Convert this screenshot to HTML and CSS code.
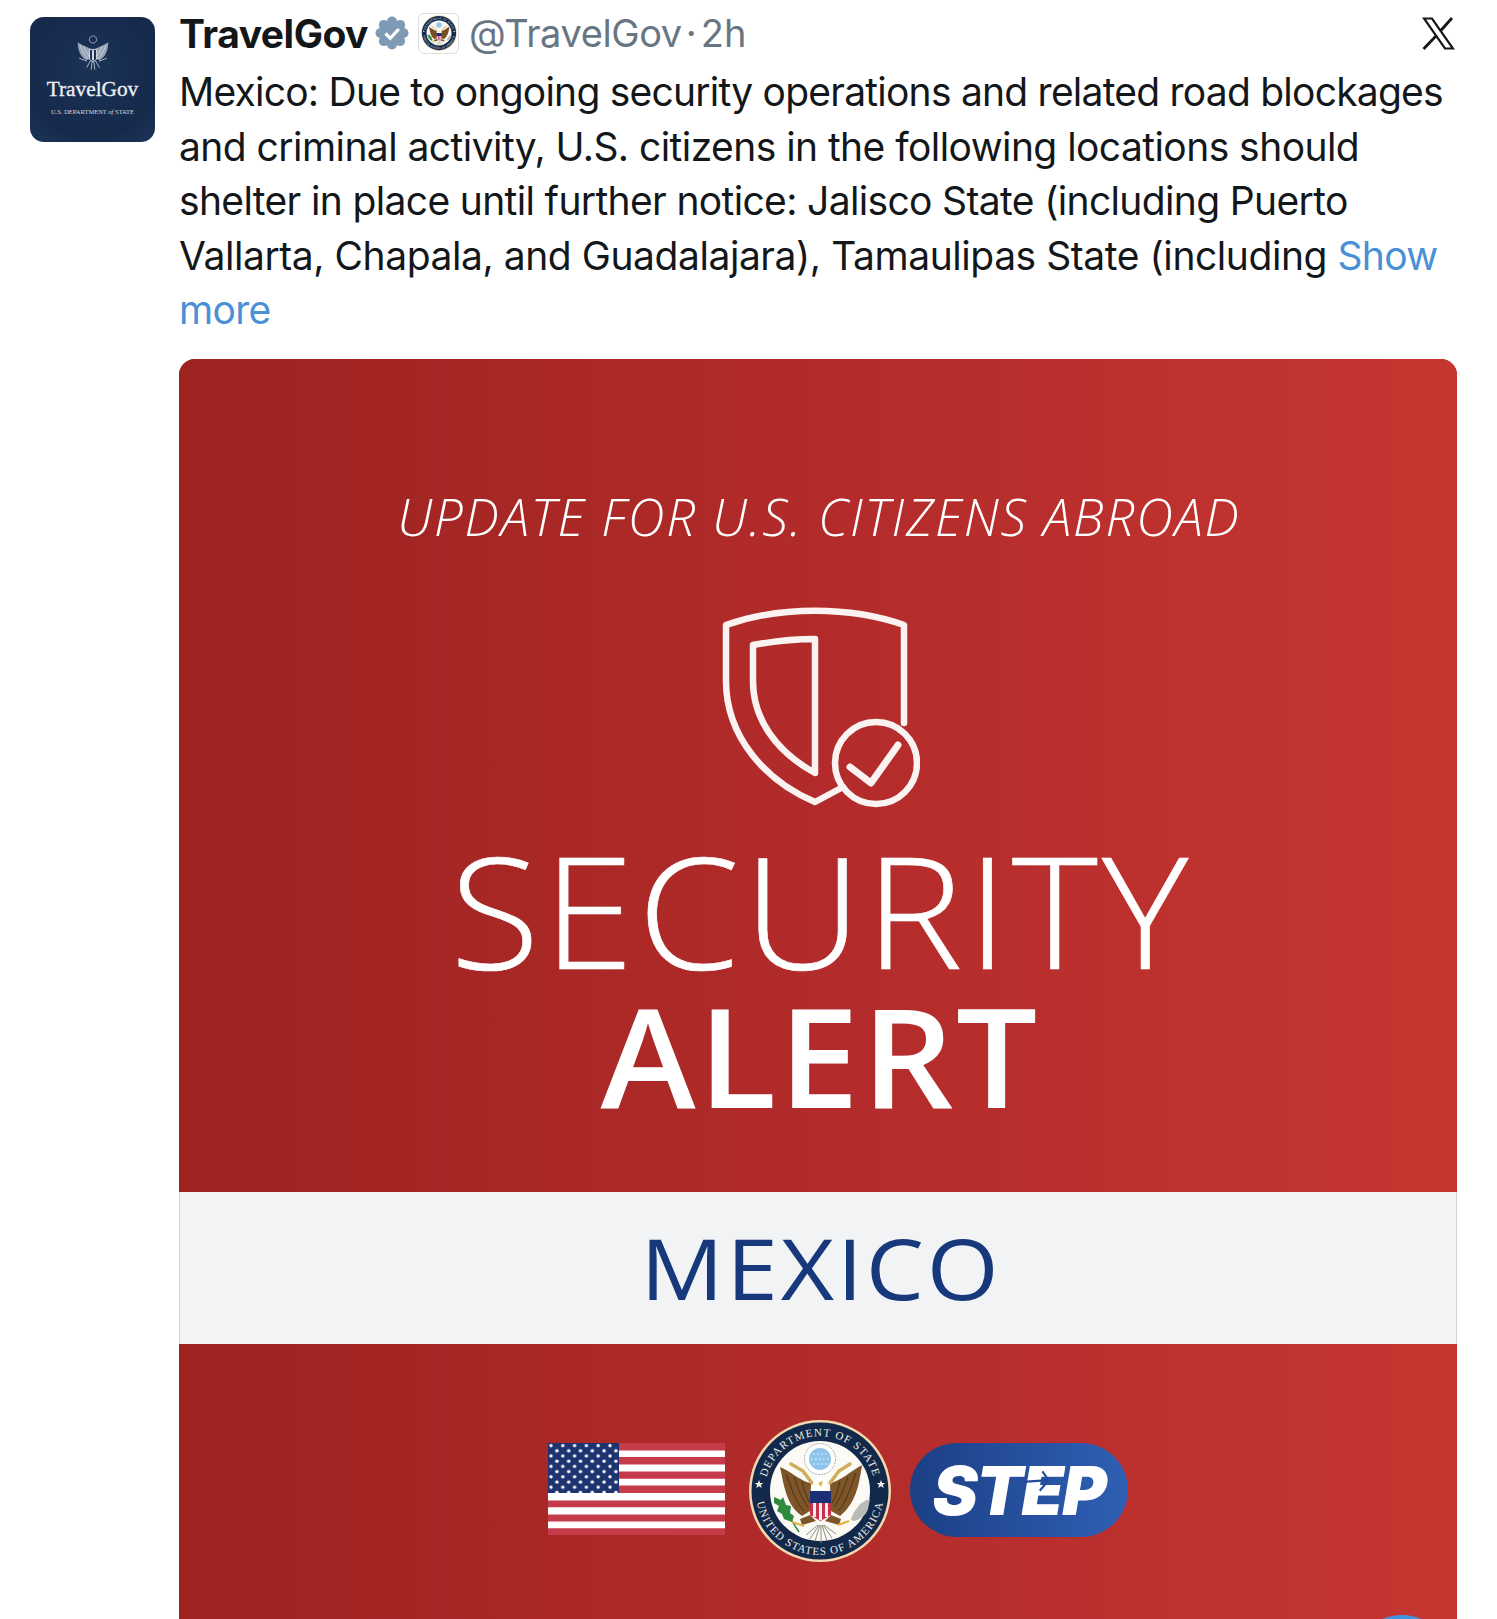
FILE: index.html
```html
<!DOCTYPE html>
<html lang="en">
<head>
<meta charset="utf-8">
<title>TravelGov post</title>
<link rel="stylesheet" href="styles.css">
</head>
<body>
<svg class="defs" width="0" height="0" aria-hidden="true">
  <defs>
    <path id="seal-top" d="M17 72A55 55 0 0 1 127 72"/>
    <path id="seal-bottom" d="M8 72A64 64 0 0 0 136 72"/>
    <symbol id="seal-art" viewBox="0 0 144 144">
      <circle cx="72" cy="72" r="71" fill="#f3d9b0"/>
      <circle cx="72" cy="72" r="68.500" fill="#12294c"/>
      <circle cx="72" cy="72" r="50" fill="#fbfaf5"/>
      <text class="seal-text"><textPath href="#seal-top" startOffset="50%">DEPARTMENT OF STATE</textPath></text>
      <text class="seal-text"><textPath href="#seal-bottom" startOffset="50%">UNITED STATES OF AMERICA</textPath></text>
      <path fill="#f1efe6" d="M11 61l1.200 3h3l-2.400 2 1 3-2.800-1.800L8.200 69l1-3-2.400-2h3zM133 61l1.200 3h3l-2.400 2 1 3-2.800-1.800-2.800 1.800 1-3-2.400-2h3z"/>
      <circle cx="72" cy="40" r="15.500" fill="#fff" stroke="#a8a8a8" stroke-width="1" stroke-dasharray="2 1"/>
      <circle cx="72" cy="40" r="11" fill="#8fc4ea"/>
      <path fill="none" stroke="#d9ecf8" stroke-width="1.500" stroke-dasharray="1.500 2.500" d="M65 35H80M63 40H81M65 45H80"/>
      <path fill="#7d5529" d="M63 64C54 63 42 52 32 48C36 66 38 86 54 97L62 92ZM82 64C91 63 103 52 114 46C111 66 108 84 92 97L83 92Z"/>
      <path fill="none" stroke="#4e3216" stroke-width="1" d="M38 55C44 70 48 84 56 92M46 58C50 70 54 80 60 88M54 62C56 70 58 78 62 84M108 54C102 70 98 84 90 92M100 58C96 70 92 80 86 88M92 62C90 70 88 78 84 84"/>
      <path fill="none" stroke="#cfae5a" stroke-width="3.500" stroke-linecap="round" d="M43 45L55 52L64 64M102 45L91 52L82 64"/>
      <path fill="#fff" d="M66 72C62 62 70 57 74 59C80 60 82 66 79 73Z"/>
      <path fill="#e3b23c" d="M70 64L75 62L73 68Z"/>
      <path fill="#c7324a" d="M62 74H83V96L72.500 102L62 96Z"/>
      <path fill="#f6eeee" d="M65 84H68V98H65ZM71 84H74V101H71ZM77 84H80V98H77Z"/>
      <path fill="#1d2f75" d="M62 72H83V84H62Z"/>
      <path fill="#7d5529" d="M52 100L62 96L68 102L54 106ZM93 100L83 96L77 102L91 106Z"/>
      <path fill="#2f8a3f" d="M26 78L33 81L35 78L38 86L43 87L42 94L46 97L44 103L36 100L34 95L29 92L31 87L26 84Z"/>
      <path fill="none" stroke="#2f8a3f" stroke-width="1.500" d="M40 96L51 113"/>
      <path fill="#b9bbb7" d="M122 80C118 81 112 84 110 88C106 92 104 96 103 101L106 102C113 100 118 96 120 90Z"/>
      <path fill="none" stroke="#e3b23c" stroke-width="2" d="M44 103L56 107M101 102L90 106"/>
      <g stroke="#8e8e86" stroke-width="1" fill="none"><path d="M70 106L58 116M71 106L62 120M72 106L67 122M73 106L73 124M74 106L79 122M75 106L84 119M76 106L88 115"/></g>
    </symbol>
  </defs>
</svg>
<main class="post">
  <div class="avatar">
    <svg class="avatar-eagle" viewBox="0 0 40 40">
      <g fill="#aab5c6" opacity=".85">
        <path d="M17 15C13 13 7 11 3 8C3 16 6 25 13 28L17 26ZM23 15C27 13 33 11 37 8C37 16 34 25 27 28L23 26Z"/>
      </g>
      <g fill="none" stroke="#dfe4ea" stroke-width=".8" stroke-linecap="round">
        <circle cx="20" cy="5" r="4" stroke-dasharray="1 1"/>
        <path d="M6 12C8 18 11 23 14 26M10 13C12 18 14 21 16 24M34 12C32 18 29 23 26 26M30 13C28 18 26 21 24 24M17 29L13 36M19 30L18 38M21 30L22 38M23 29L27 36M5 26L13 29M35 26L27 29"/>
      </g>
      <path fill="#1c3557" stroke="#e6eaef" stroke-width="1" d="M16 16H24V27L20 30L16 27Z"/>
      <path fill="#e6eaef" d="M19 17H21V28H19Z"/>
    </svg>
    <div class="avatar-name">TravelGov</div>
    <div class="avatar-dept">U.S. DEPARTMENT <i>of</i> STATE</div>
  </div>
  <div class="content">
    <header class="meta">
      <span class="name">TravelGov</span>
      <svg class="badge" viewBox="0 0 34 34">
        <g fill="#7f9ab5">
          <circle cx="17" cy="17" r="12.500"/>
          <circle cx="17" cy="5.500" r="5"/><circle cx="25.100" cy="8.900" r="5"/><circle cx="28.500" cy="17" r="5"/><circle cx="25.100" cy="25.100" r="5"/>
          <circle cx="17" cy="28.500" r="5"/><circle cx="8.900" cy="25.100" r="5"/><circle cx="5.500" cy="17" r="5"/><circle cx="8.900" cy="8.900" r="5"/>
        </g>
        <path fill="none" stroke="#fff" stroke-width="3.200" d="M10.500 17.500l4.800 4.800 8.500-9.300"/>
      </svg>
      <span class="mini-seal"><svg class="mini-seal-art"><use href="#seal-art"/></svg></span>
      <span class="handle">@TravelGov</span>
      <span class="dot">·</span>
      <span class="time">2h</span>
      <svg class="x-logo" viewBox="1 0 32 33"><path fill="none" stroke="#14171a" stroke-width="2.200" d="M2.500 1.500H10.500L31.500 31.500H23.500Z"/><path fill="none" stroke="#14171a" stroke-width="2.800" d="M30.500 1L18.700 14.300M14.700 18.700L2 32"/></svg>
    </header>
    <p class="tweet">
      <span class="line l1">Mexico: Due to ongoing security operations and related road blockages</span>
      <span class="line l2">and criminal activity, U.S. citizens in the following locations should</span>
      <span class="line l3">shelter in place until further notice: Jalisco State (including Puerto</span>
      <span class="line l4">Vallarta, Chapala, and Guadalajara), Tamaulipas State (including <a class="more">Show</a></span>
      <span class="line"><a class="more">more</a></span>
    </p>
    <section class="card">
      <div class="red red-top">
        <div class="update">UPDATE FOR U.S. CITIZENS ABROAD</div>
        <svg class="shield" viewBox="0 0 200 204">
          <g fill="none" stroke="#fbf3f1" stroke-width="6.500" stroke-linejoin="round" stroke-linecap="round">
            <path d="M184 117V19C130 0 60 0 6 19V75C6 130 45 175 95 196L123 181"/>
            <path d="M33 39C55 35 75 33 95 33V167C55 145 33 112 33 75Z"/>
            <circle cx="156" cy="157" r="41"/>
            <path stroke-width="7" d="M130 161L151 177L178 139"/>
          </g>
        </svg>
        <div class="security">SECURITY</div>
        <div class="alert">ALERT</div>
      </div>
      <div class="band"><span class="band-word">MEXICO</span></div>
      <div class="red red-bottom">
        <svg class="flag" viewBox="0 0 177 92">
          <defs>
            <pattern id="stars" width="11.800" height="10.400" patternUnits="userSpaceOnUse">
              <circle cx="3" cy="2.600" r="1.700" fill="#fff"/>
              <circle cx="8.900" cy="7.800" r="1.700" fill="#fff"/>
            </pattern>
          </defs>
          <rect width="177" height="92" fill="#c53b4a"/>
          <path fill="#fff" d="M71 7.400H177V14H71ZM71 21.400H177V28.500H71ZM71 35.800H177V42.500H71ZM0 50H177V57.500H0ZM0 64.200H177V71.600H0ZM0 78.600H177V85.300H0Z"/>
          <rect width="71" height="50" fill="#1d3470"/>
          <rect width="71" height="50" fill="url(#stars)"/>
        </svg>
        <svg class="seal"><use href="#seal-art"/></svg>
        <div class="step">
          <span class="step-word">STEP</span>
          <svg class="plane" viewBox="0 0 34 24"><path fill="none" stroke="#234b9c" stroke-width="2.400" d="M0 13L29 11M22 1L29 11L19 23"/></svg>
        </div>
      </div>
      <span class="fab"></span>
    </section>
  </div>
</main>
</body>
</html>
```
FILE: styles.css
```css
* { box-sizing: border-box; }
html, body { margin: 0; height: 1619px; overflow: hidden; background: #fff; }
body { font-family: Inter, "Liberation Sans", sans-serif; color: #14171a; }
.defs { position: absolute; }

.post { display: flex; gap: 24px; padding: 17px 40px 0 30px; height: 1619px; }

.avatar {
  flex: none; width: 125px; height: 125px; border-radius: 14px;
  background: radial-gradient(circle at 50% 40%, #1b3355, #15294b 70%, #1d3659);
  display: flex; flex-direction: column; align-items: center; padding-top: 18px; color: #eef0f3;
}
.avatar-eagle { width: 36px; height: 36px; flex: none; }
.avatar-name { font: 21.300px/1 "Liberation Serif", serif; margin-top: 8px; -webkit-text-stroke: .3px #eef0f3; }
.avatar-dept { font: 6.500px/1 "Liberation Serif", serif; margin-top: 9px; white-space: nowrap; opacity: .85; }

.content { flex: 1; min-width: 0; display: flex; flex-direction: column; height: 1602px; }

.meta { display: flex; align-items: center; height: 36px; margin-top: -2px; font-size: 38px; white-space: nowrap; }
.name { font-weight: 700; font-size: 39px; letter-spacing: -.5px; }
.badge { width: 34px; height: 34px; margin-left: 7px; flex: none; }
.mini-seal {
  width: 41px; height: 41px; margin-left: 9px; border: 1px solid #dcdfe2; border-radius: 6px; flex: none;
  display: flex; align-items: center; justify-content: center; background: #fff;
}
.mini-seal-art { width: 36px; height: 36px; }
.handle, .dot, .time { color: #687684; }
.handle { margin-left: 10px; letter-spacing: -.4px; }
.dot { margin: 0 4px; }
.x-logo { width: 33px; height: 33px; margin-left: auto; margin-right: 2px; flex: none; }

.tweet { margin: 14px 0 0; font-size: 39px; line-height: 54.6px; white-space: nowrap; }
.line { display: block; letter-spacing: -.7px; }
.l1 { letter-spacing: -.77px; }
.l2 { letter-spacing: -.56px; }
.l3 { letter-spacing: -.65px; }
.l4 { letter-spacing: -.44px; }
.more { color: #4a90d6; letter-spacing: -.7px; }

.card {
  position: relative; margin-top: 21px; flex: 1; border-radius: 16px 16px 0 0; overflow: hidden;
  display: flex; flex-direction: column; background: #b42b2a;
}
.red { background: linear-gradient(90deg, #9c2320, #b42c2b 55%, #c63631); color: #fff; display: flex; }
.red-top { height: 833px; flex: none; flex-direction: column; align-items: center; padding-top: 132px; }
.red-bottom { flex: 1; align-items: flex-start; padding: 75px 0 0 369px; gap: 23px; }

.update { font: italic 300 51px/1 "Open Sans", sans-serif; letter-spacing: 1.830px; white-space: nowrap; margin-left: 2px; }
.shield { width: 200px; height: 204px; margin: 64px 0 0 4px; flex: none; }
.security { font: 300 155px/1 "Open Sans", sans-serif; margin: 21px 0 0 6px; letter-spacing: 3.500px; transform: scaleX(1.06); -webkit-text-stroke: .6px #fff; }
.alert { font: 600 137px/1 "Open Sans", sans-serif; margin: 1px 0 0 4px; letter-spacing: 2.400px; transform: scaleX(1.05); }

.band {
  flex: none; height: 152px; background: #f2f3f5; color: #17397c;
  display: flex; align-items: center; justify-content: center;
  font: 400 84px/1 "Open Sans", sans-serif; padding-left: 6px;
  border-left: 1px solid #cfd2d6; border-right: 1px solid #cfd2d6;
}
.band-word { display: block; letter-spacing: 2.600px; transform: scaleX(1.1); }

.flag { width: 177px; height: 92px; margin-top: 24px; flex: none; }
.seal { width: 144px; height: 144px; flex: none; }
.seal-text { font: 11px "Liberation Serif", serif; fill: #f1efe6; text-anchor: middle; letter-spacing: 1.100px; }
.step {
  position: relative; width: 218px; height: 94px; margin: 24px 0 0 -5px; border-radius: 47px; flex: none;
  background: linear-gradient(90deg, #1c3f85, #2f5fb4);
  display: flex; align-items: center; justify-content: center;
}
.step-word { font: italic 900 68px/1 Inter, sans-serif; color: #fff; letter-spacing: -1.500px; }
.plane { position: absolute; left: 113px; top: 27px; width: 30px; height: 22px; }

.fab { position: absolute; left: 1173px; top: 1256px; width: 100px; height: 100px; border-radius: 50%; background: #3f93e0; }
```
